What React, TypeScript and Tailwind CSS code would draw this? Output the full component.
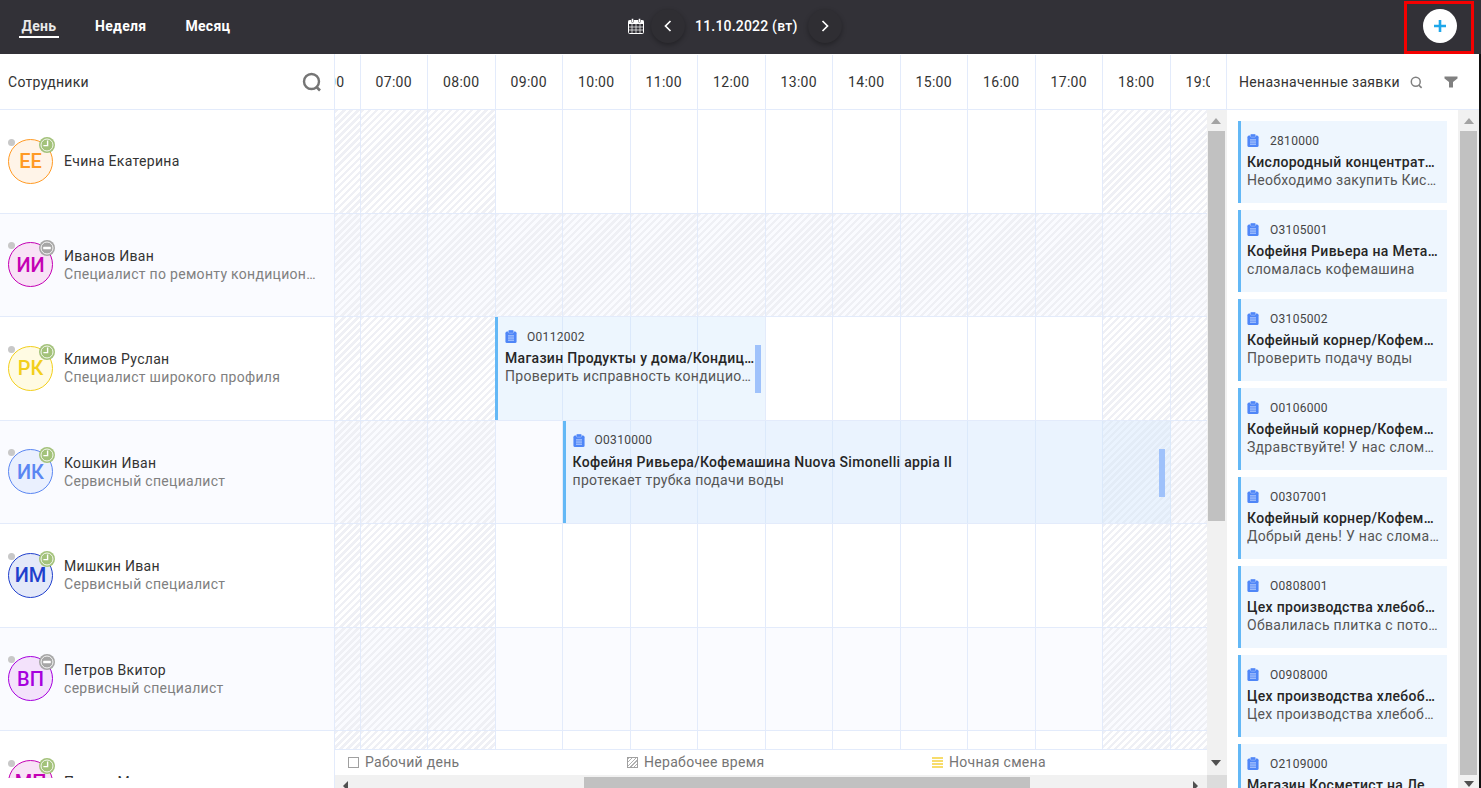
import React from "react";

const HOURS = ["06:00","07:00","08:00","09:00","10:00","11:00","12:00","13:00","14:00","15:00","16:00","17:00","18:00","19:00"];

function Clip() {
  return (
    <svg viewBox="0 0 14 15" className="w-[12px] h-[13px] shrink-0">
      <rect x="0.5" y="1.8" width="13" height="13.2" rx="1.8" fill="#4f86f7" />
      <rect x="4" y="0" width="6" height="3.6" rx="1" fill="#4f86f7" stroke="#cfe0ff" strokeWidth="0.5" />
      <path d="M3.5 6.8h7M3.5 9.3h7M3.5 11.8h7" stroke="#d6e4ff" strokeWidth="1" />
    </svg>
  );
}

function Tri({ dir, color }: { dir: "u" | "d" | "l" | "r"; color: string }) {
  const pts = { u: "5,0 10,6 0,6", d: "0,0 10,0 5,6", l: "5,0 5,10 0,5", r: "0,0 5,5 0,10" }[dir];
  const box = dir === "u" || dir === "d" ? { w: 10, h: 6 } : { w: 5, h: 10 };
  return (
    <svg width={box.w} height={box.h} viewBox={`0 0 ${box.w} ${box.h}`} className="shrink-0">
      <polygon points={pts} fill={color} />
    </svg>
  );
}

function Badge({ off }: { off?: boolean }) {
  const fill = off ? "#a6a6a6" : "#a3c27a";
  return (
    <svg viewBox="0 0 16 16" className="absolute -top-[3px] -right-[3px] w-[16px] h-[16px]">
      <circle cx="8" cy="8" r="8" fill={fill} />
      <circle cx="8" cy="8" r="6" fill={fill} stroke="#fff" strokeWidth="1" opacity="0.9" />
      {off ? (
        <rect x="4.2" y="6.7" width="7.6" height="2.6" rx="0.6" fill="#fff" />
      ) : (
        <path d="M8.6 3.6v5H4.4" fill="none" stroke="#fff" strokeWidth="1.4" />
      )}
    </svg>
  );
}

type Emp = { i: string; n: string; s: string; c: string; b: string; off?: boolean; fullOff?: boolean };
const EMP: Emp[] = [
  { i: "ЕЕ", n: "Ечина Екатерина", s: "", c: "#ff9a24", b: "#fff4e8" },
  { i: "ИИ", n: "Иванов Иван", s: "Специалист по ремонту кондиционеров", c: "#c400b4", b: "#f8e2f6", off: true, fullOff: true },
  { i: "РК", n: "Климов Руслан", s: "Специалист широкого профиля", c: "#f2cf1c", b: "#fffbe3" },
  { i: "ИК", n: "Кошкин Иван", s: "Сервисный специалист", c: "#5a86f2", b: "#eaf0fe" },
  { i: "ИМ", n: "Мишкин Иван", s: "Сервисный специалист", c: "#1f3fcc", b: "#e4e9f9" },
  { i: "ВП", n: "Петров Вкитор", s: "сервисный специалист", c: "#a600de", b: "#f3e2fb", off: true },
  { i: "МП", n: "Петров Максим", s: "", c: "#c400b4", b: "#f8e2f6" },
];

const CARDS = [
  ["2810000", "Кислородный концентратор", "Необходимо закупить Кислород"],
  ["О3105001", "Кофейня Ривьера на Металлургов", "сломалась кофемашина"],
  ["О3105002", "Кофейный корнер/Кофемашина", "Проверить подачу воды"],
  ["О0106000", "Кофейный корнер/Кофемашина", "Здравствуйте! У нас сломалась"],
  ["О0307001", "Кофейный корнер/Кофемашина", "Добрый день! У нас сломалась"],
  ["О0808001", "Цех производства хлебобулочных", "Обвалилась плитка с потолка"],
  ["О0908000", "Цех производства хлебобулочных", "Цех производства хлебобулочных"],
  ["О2109000", "Магазин Косметист на Ленина", "Не работает"],
];

function Ev({ left, width, handle, num, title, desc }: { left: number; width: number; handle: number; num: string; title: string; desc: string }) {
  return (
    <div
      className="absolute top-0 bottom-0 border-l-[3px] border-[#63b8f6] bg-[rgba(205,229,252,0.36)] pl-[7px] pr-[9px] pt-[11.5px]"
      style={{ left, width }}
    >
      <div className="flex items-center h-[16px] text-[12px] tracking-[0.3px] text-[#444]">
        <Clip />
        <span className="ml-[10px]">{num}</span>
      </div>
      <div className="mt-[3.5px] text-[14px] leading-[20px] font-medium tracking-[0.3px] text-[#262626] truncate">{title}</div>
      <div className="text-[14px] leading-[17px] tracking-[0.3px] text-[#555] truncate">{desc}</div>
      <div className="absolute top-[28px] w-[6px] h-[48px] bg-[#9fc2fb]" style={{ right: handle }} />
    </div>
  );
}

function Row({ idx }: { idx: number }) {
  const alt = idx % 2 === 1;
  const e = EMP[idx];
  return (
    <div className={`relative h-[103.5px] shrink-0 border-b border-[#e3ebfb] flex -ml-[42px] ${alt ? "bg-[#fafbff]" : "bg-white"}`}>
      {HOURS.map((h, k) => {
        const hatch = e.fullOff || k < 3 || k >= 12;
        return (
          <div
            key={h}
            className={`w-[67.5px] shrink-0 border-r border-[#e3ebfb] ${hatch ? "bg-[repeating-linear-gradient(135deg,#eff0f5_0px,#eff0f5_2.5px,transparent_2.5px,transparent_5px)]" : ""}`}
          />
        );
      })}
      {idx === 2 && (
        <Ev left={202} width={270} handle={4} num="О0112002" title="Магазин Продукты у дома/Кондиционер" desc="Проверить исправность кондиционера" />
      )}
      {idx === 3 && (
        <Ev left={269.5} width={608} handle={5.5} num="О0310000" title="Кофейня Ривьера/Кофемашина Nuova Simonelli appia II" desc="протекает трубка подачи воды" />
      )}
    </div>
  );
}

export default function App() {
  return (
    <div className="w-[1481px] h-[788px] overflow-hidden flex flex-col bg-white font-['Roboto',sans-serif] text-[14px] tracking-[0.3px] text-[#333]">
      <header className="relative h-[54px] shrink-0 bg-[#323137] flex items-center">
        <nav className="flex items-start h-[22px] pl-[19px] text-[14px] leading-[20px] font-bold text-white">
          <span className="w-[40px] h-[22px] text-center border-b-2 border-white text-[#e9e9e9]">День</span>
          <span className="ml-[36px]">Неделя</span>
          <span className="ml-[39px]">Месяц</span>
        </nav>
        <div className="absolute left-[628px] top-[9px] flex items-center text-white">
          <svg viewBox="0 0 16 16" className="w-[16px] h-[16px]">
            <rect x="0.5" y="2.5" width="15" height="13" rx="1" fill="none" stroke="#fff" />
            <rect x="0.5" y="2.5" width="15" height="3.5" fill="#fff" />
            <rect x="3.5" y="0.5" width="2" height="4" rx="0.8" fill="#fff" stroke="#323137" strokeWidth="0.5" />
            <rect x="10.5" y="0.5" width="2" height="4" rx="0.8" fill="#fff" stroke="#323137" strokeWidth="0.5" />
            <path d="M4 6v9M8 6v9M12 6v9M1 9h14M1 12h14" stroke="#fff" strokeWidth="0.7" />
          </svg>
          <button className="ml-[7px] w-[34px] h-[34px] rounded-full bg-[#2f2e33] shadow-[0_2px_5px_rgba(0,0,0,0.3)] flex items-center justify-center">
            <svg viewBox="0 0 10 14" className="w-[10px] h-[14px]"><path d="M7.5 2L2.5 7l5 5" fill="none" stroke="#fff" strokeWidth="1.7" /></svg>
          </button>
          <span className="ml-[10px] w-[102px] text-[14px] font-medium tracking-[0.2px] whitespace-nowrap">11.10.2022 (вт)</span>
          <button className="ml-[11px] w-[34px] h-[34px] rounded-full bg-[#2f2e33] shadow-[0_2px_5px_rgba(0,0,0,0.3)] flex items-center justify-center">
            <svg viewBox="0 0 10 14" className="w-[10px] h-[14px]"><path d="M2.5 2l5 5-5 5" fill="none" stroke="#fff" strokeWidth="1.7" /></svg>
          </button>
        </div>
        <div className="absolute left-[1404px] top-[1px] w-[70px] h-[53px] border-[3px] border-[#f40000] flex items-start pl-[16px] pt-[5px]">
          <span className="w-[34px] h-[34px] rounded-full bg-white flex items-center justify-center">
            <svg viewBox="0 0 12 12" className="w-[12px] h-[12px]"><path d="M6 0v12M0 6h12" stroke="#1ea7ea" strokeWidth="2.6" /></svg>
          </span>
        </div>
      </header>

      <div className="flex-1 flex min-h-0">
        {/* Employees */}
        <aside className="w-[335px] shrink-0 border-r border-[#e3ebfb] flex flex-col">
          <div className="h-[56px] shrink-0 border-b border-[#e3ebfb] flex items-center justify-between pl-[8px] pr-[12px] pt-[1px]">
            <span className="text-[#333]">Сотрудники</span>
            <svg viewBox="0 0 20 20" className="w-[20px] h-[20px]">
              <circle cx="9.5" cy="9.5" r="7.5" fill="none" stroke="#757575" strokeWidth="2.4" />
              <path d="M14.5 15l3.5 3.5" stroke="#757575" strokeWidth="2.6" />
            </svg>
          </div>
          <div className="h-[668px] overflow-hidden shrink-0">
            {EMP.map((e, i) => (
              <div key={e.i} className={`h-[103.5px] border-b border-[#e3ebfb] flex items-center pl-[8px] ${i % 2 ? "bg-[#fafbff]" : "bg-white"}`}>
                <div
                  className="relative w-[45px] h-[45px] shrink-0 rounded-full border flex items-center justify-center text-[20px] font-medium tracking-normal leading-none"
                  style={{ borderColor: e.c, color: e.c, backgroundColor: e.b }}
                >
                  {e.i}
                  <span className="absolute -top-[1px] -left-[1px] w-[7px] h-[7px] rounded-full bg-[#c8c8c8]" />
                  <Badge off={e.off} />
                </div>
                <div className="ml-[11px] min-w-0 w-[253px]">
                  <div className="leading-[18px] text-[#333]">{e.n}</div>
                  {e.s && <div className="leading-[18px] text-[#808080] truncate">{e.s}</div>}
                </div>
              </div>
            ))}
          </div>
        </aside>

        {/* Timeline */}
        <section className="w-[892px] shrink-0 flex flex-col">
          <div className="h-[56px] shrink-0 border-b border-r border-[#e3ebfb] bg-white">
            <div className="w-[875px] h-full overflow-hidden">
              <div className="flex h-full -ml-[42px] pt-[1px]">
                {HOURS.map((h) => (
                  <div key={h} className="w-[67.5px] shrink-0 border-r border-[#e3ebfb] flex items-center justify-center text-[#333]">
                    {h}
                  </div>
                ))}
              </div>
            </div>
          </div>
          <div className="flex-1 flex min-h-0">
            <div className="w-[872px] shrink-0 flex flex-col">
              <div className="h-[640px] overflow-hidden border-b border-[#e3ebfb]">
                {EMP.map((_, i) => (
                  <Row key={i} idx={i} />
                ))}
              </div>
              <div className="h-[25px] shrink-0 flex items-center pl-[13px] text-[#757575]">
                <div className="w-[279px] flex items-center">
                  <span className="w-[11px] h-[11px] border border-[#a0a0a0]" />
                  <span className="ml-[6px]">Рабочий день</span>
                </div>
                <div className="w-[305px] flex items-center">
                  <span className="w-[11px] h-[11px] border border-[#a0a0a0] bg-[repeating-linear-gradient(135deg,#b0b0b0_0px,#b0b0b0_1px,#fff_1px,#fff_2.5px)]" />
                  <span className="ml-[6px]">Нерабочее время</span>
                </div>
                <div className="flex items-center">
                  <span className="w-[11px] h-[11px] bg-[repeating-linear-gradient(180deg,#f7dc6b_0px,#f7dc6b_2px,#fff_2px,#fff_3px)]" />
                  <span className="ml-[6px]">Ночная смена</span>
                </div>
              </div>
              <div className="h-[13px] shrink-0 bg-[#f1f1f1] flex overflow-hidden">
                <div className="w-[249px] shrink-0 pl-[8px] pt-[6px]"><Tri dir="l" color="#505050" /></div>
                <div className="w-[446px] shrink-0 h-[11px] mt-[2px] bg-[#c1c1c1]" />
                <div className="flex-1 flex justify-end pr-[9px] pt-[6px]"><Tri dir="r" color="#505050" /></div>
              </div>
            </div>
            <div className="w-[20px] shrink-0 flex flex-col bg-[#f1f1f1]">
              <div className="h-[21px] flex items-center justify-center pr-[2px]"><Tri dir="u" color="#a3a3a3" /></div>
              <div className="h-[390px] w-[17px] bg-[#c1c1c1] ml-[1px]" />
              <div className="flex-1 flex items-end justify-center pr-[2px] pb-[9px]"><Tri dir="d" color="#505050" /></div>
              <div className="h-[13px] bg-[#dcdcdc]" />
            </div>
          </div>
        </section>

        {/* Unassigned */}
        <aside className="w-[252px] shrink-0 flex flex-col bg-white">
          <div className="h-[56px] shrink-0 border-b border-[#e3ebfb] flex items-center pl-[12px] pr-[21px] pt-[1px]">
            <span className="text-[#333] whitespace-nowrap">Неназначенные заявки</span>
            <svg viewBox="0 0 14 14" className="w-[13px] h-[13px] ml-[10px]">
              <circle cx="6.2" cy="6.2" r="4.8" fill="none" stroke="#808080" strokeWidth="1.6" />
              <path d="M9.5 9.8l3 3" stroke="#808080" strokeWidth="1.7" />
            </svg>
            <svg viewBox="0 0 14 12" className="w-[14px] h-[12px] ml-auto">
              <path d="M0.5 0.5h13v2l-4.5 3.5v5.5h-4V6L0.5 2.5z" fill="#808080" />
            </svg>
          </div>
          <div className="flex-1 min-h-0 flex">
            <div className="w-[231px] shrink-0 overflow-hidden px-[11px] pt-[11px] flex flex-col gap-[7px]">
              {CARDS.map((c) => (
                <div key={c[0]} className="h-[82px] shrink-0 border-l-[3px] border-[#63b8f6] bg-[#eef6fe] pl-[6px] pr-[8px] pt-[11.5px]">
                  <div className="flex items-center h-[16px] text-[12px] text-[#444]">
                    <Clip />
                    <span className="ml-[11px]">{c[0]}</span>
                  </div>
                  <div className="mt-[3.5px] text-[14px] leading-[20px] font-medium text-[#262626] truncate">{c[1]}</div>
                  <div className="text-[14px] leading-[17px] text-[#555] truncate">{c[2]}</div>
                </div>
              ))}
            </div>
            <div className="w-[21px] shrink-0 flex flex-col bg-[#f1f1f1]">
              <div className="h-[21px] flex items-center justify-center"><Tri dir="u" color="#a3a3a3" /></div>
              <div className="h-[644px] w-[17px] bg-[#c1c1c1] ml-[2px]" />
              <div className="flex-1 flex items-start justify-center pt-[6px]"><Tri dir="d" color="#505050" /></div>
            </div>
          </div>
        </aside>
        <div className="w-[2px] shrink-0 bg-[#111]" />
      </div>
    </div>
  );
}
